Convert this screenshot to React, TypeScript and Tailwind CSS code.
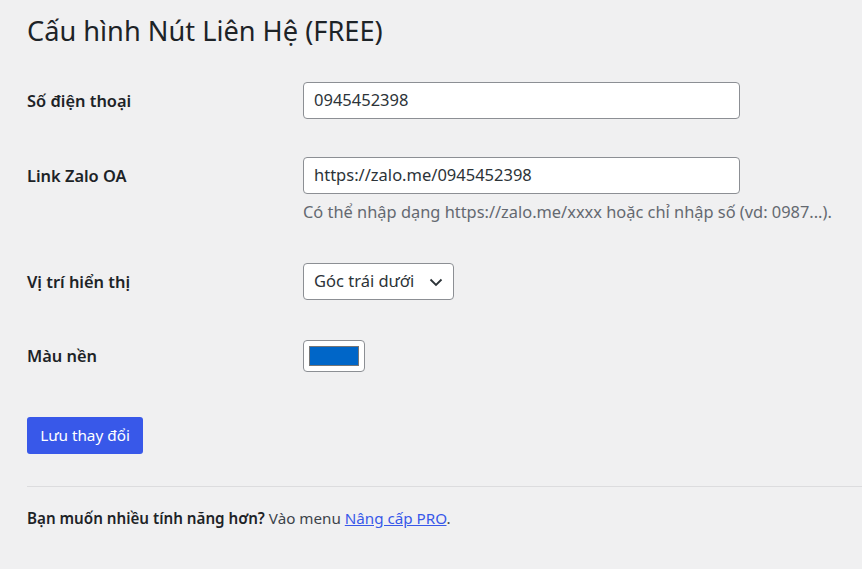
import React from 'react';

const font = { fontFamily: '"Noto Sans", "Open Sans", sans-serif' };

const Chevron = () => (
  <svg width="16" height="16" viewBox="0 0 16 16" className="text-[#2c3338]">
    <path d="M2.5 5.5 L8 11 L13.5 5.5" fill="none" stroke="currentColor" strokeWidth="1.8" />
  </svg>
);

export default function App() {
  return (
    <div className="min-h-[569px] w-full bg-[#f0f0f1] pl-[27px] pt-[11px] text-[#1d2327]" style={font}>
      <h1 className="h-[40px] text-[27.2px] leading-[40px] font-normal">
        Cấu hình Nút Liên Hệ (FREE)
      </h1>

      <div className="mt-[31px] flex items-start">
        <div className="w-[276px] text-[16.4px] font-semibold leading-[37px]">Số điện thoại</div>
        <div className="flex h-[37px] w-[437px] items-center rounded-[4px] border border-[#8c8f94] bg-white px-[10px] text-[16.5px] text-[#2c3338]">
          0945452398
        </div>
      </div>

      <div className="mt-[38px] flex items-start">
        <div className="w-[276px] text-[16.4px] font-semibold leading-[37px]">Link Zalo OA</div>
        <div>
          <div className="flex h-[37px] w-[437px] items-center rounded-[4px] border border-[#8c8f94] bg-white px-[10px] text-[16.5px] text-[#2c3338]">
            https://zalo.me/0945452398
          </div>
          <p className="mt-[6px] text-[16.4px] leading-[24px] text-[#646970] whitespace-nowrap">
            Có thể nhập dạng https://zalo.me/xxxx hoặc chỉ nhập số (vd: 0987...).
          </p>
        </div>
      </div>

      <div className="mt-[39px] flex items-start">
        <div className="w-[276px] text-[16.4px] font-semibold leading-[37px]">Vị trí hiển thị</div>
        <div className="flex h-[37px] w-[151px] items-center justify-between rounded-[4px] border border-[#8c8f94] bg-white pl-[10px] pr-[9px] text-[16.5px] text-[#2c3338]">
          <span>Góc trái dưới</span>
          <Chevron />
        </div>
      </div>

      <div className="mt-[40px] flex items-center">
        <div className="w-[276px] text-[16.4px] font-semibold leading-[30px]">Màu nền</div>
        <div className="flex h-[32px] w-[62px] items-center justify-center rounded-[4px] border border-[#8c8f94] bg-white">
          <div className="h-[20px] w-[50px] border border-[#767676] bg-[#0066c8]" />
        </div>
      </div>

      <button className="mt-[45px] flex h-[37px] w-[116px] items-center justify-center rounded-[3px] bg-[#3858e9] text-[15.3px] text-white">
        Lưu thay đổi
      </button>

      <div className="mt-[32px] h-px bg-[#dcdcde]" />

      <p className="mt-[19px] text-[15.2px] leading-[24px] text-[#3c434a]">
        <strong className="font-semibold text-[#1d2327]">Bạn muốn nhiều tính năng hơn?</strong> Vào menu{' '}
        <a className="text-[#3858e9] underline">Nâng cấp PRO</a>.
      </p>
    </div>
  );
}
